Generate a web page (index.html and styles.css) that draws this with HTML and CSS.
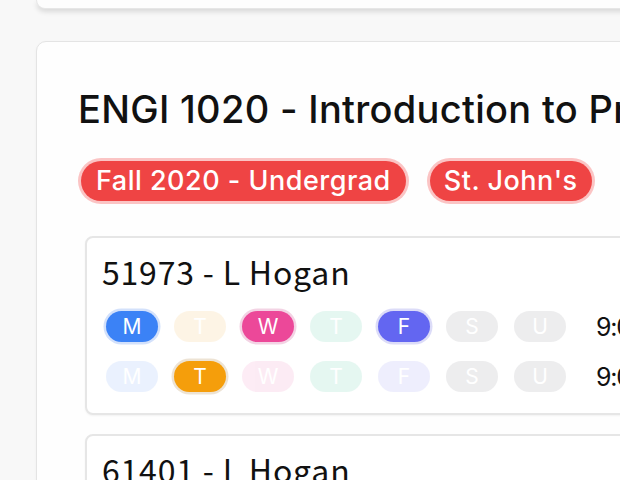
FILE: index.html
```html
<!DOCTYPE html>
<html>
<head>
<meta charset="utf-8">
<link rel="stylesheet" href="styles.css">
</head>
<body>
<div class="page">
  <div class="top-card"></div>
  <div class="course-card">
    <h1 class="course-title">ENGI 1020 - Introduction to Programming</h1>
    <div class="badges">
      <span class="badge">Fall 2020 - Undergrad</span>
      <span class="badge">St. John's</span>
    </div>
    <div class="sections">
      <div class="section">
        <div class="section-title">51973 - L Hogan</div>
        <div class="meet-row">
          <div class="days">
            <span class="day blue on">M</span>
            <span class="day orange">T</span>
            <span class="day pink on">W</span>
            <span class="day green">T</span>
            <span class="day indigo on">F</span>
            <span class="day gray">S</span>
            <span class="day gray">U</span>
          </div>
          <span class="time">9:00 AM - 9:50 AM</span>
        </div>
        <div class="meet-row">
          <div class="days">
            <span class="day blue">M</span>
            <span class="day orange on">T</span>
            <span class="day pink">W</span>
            <span class="day green">T</span>
            <span class="day indigo">F</span>
            <span class="day gray">S</span>
            <span class="day gray">U</span>
          </div>
          <span class="time">9:00 AM - 10:50 AM</span>
        </div>
      </div>
      <div class="section">
        <div class="section-title">61401 - L Hogan</div>
      </div>
    </div>
  </div>
</div>
</body>
</html>
```

FILE: styles.css
```css
html, body {
  margin: 0;
  padding: 0;
  overflow: hidden;
  background: #f8f8f8;
  font-family: Inter, "Noto Sans", sans-serif;
  color: #111;
}

.page {
  width: 760px;
  padding-left: 36px;
}

.top-card {
  height: 8px;
  background: #fdfdfd;
  border: 1px solid #e6e6e6;
  border-top: none;
  border-radius: 0 0 10px 10px;
  box-shadow: 0 3px 5px rgba(0, 0, 0, 0.12);
}

.course-card {
  margin-top: 32px;
  background: #fefefe;
  border: 1px solid #e4e4e4;
  border-radius: 10px;
  padding: 45px 0 20px 41px;
  box-shadow: 0 1px 3px rgba(0, 0, 0, 0.04);
}

.course-title {
  margin: 0;
  font-size: 38px;
  font-weight: 500;
  line-height: 44px;
  white-space: nowrap;
  letter-spacing: 0.3px;
}

.badges {
  display: flex;
  gap: 24px;
  margin-top: 30px;
  padding-left: 3px;
}

.badge {
  background: #ef4444;
  color: #fff;
  border-radius: 999px;
  box-shadow: 0 0 0 3px #fbc4c4;
  font-size: 27px;
  font-weight: 500;
  line-height: 40px;
  letter-spacing: 0.5px;
  padding: 0 15px;
}

.badge + .badge {
  padding: 0 14px;
}

.sections {
  margin-top: 35px;
  margin-left: 7px;
  display: flex;
  flex-direction: column;
  gap: 19px;
}

.section {
  background: #fff;
  border: 2px solid #e6e6e6;
  border-radius: 8px;
  padding: 13px 15px 21px 15px;
  box-shadow: 0 1px 2px rgba(0, 0, 0, 0.05);
}

.section-title {
  font-family: "Noto Sans CJK JP", "Noto Sans", sans-serif;
  font-size: 32px;
  line-height: 40px;
  letter-spacing: 0.8px;
  white-space: nowrap;
}

.meet-row {
  display: flex;
  align-items: center;
  margin-top: 20px;
  padding-left: 4px;
}

.meet-row + .meet-row {
  margin-top: 19px;
}

.days {
  display: flex;
  gap: 16px;
}

.day {
  width: 52px;
  height: 31px;
  border-radius: 999px;
  display: flex;
  align-items: center;
  justify-content: center;
  color: #fff;
  font-size: 21px;
  line-height: 1;
  opacity: 0.1;
}

.day.on {
  opacity: 1;
}

.day.gray { background: #71717a; opacity: 0.12; }
.blue { background: #3b82f6; }
.blue.on { box-shadow: 0 0 0 2.5px #d3e1fb; }
.orange { background: #f59e0b; }
.orange.on { box-shadow: 0 0 0 2.5px #ede3d4; }
.pink { background: #ec4899; }
.pink.on { box-shadow: 0 0 0 2.5px #f3d3e4; }
.green { background: #10b981; }
.indigo { background: #6366f1; }
.indigo.on { box-shadow: 0 0 0 2.5px #dcdcf8; }

.time {
  margin-left: 30px;
  font-size: 25px;
  letter-spacing: -1.2px;
  white-space: nowrap;
}
```
